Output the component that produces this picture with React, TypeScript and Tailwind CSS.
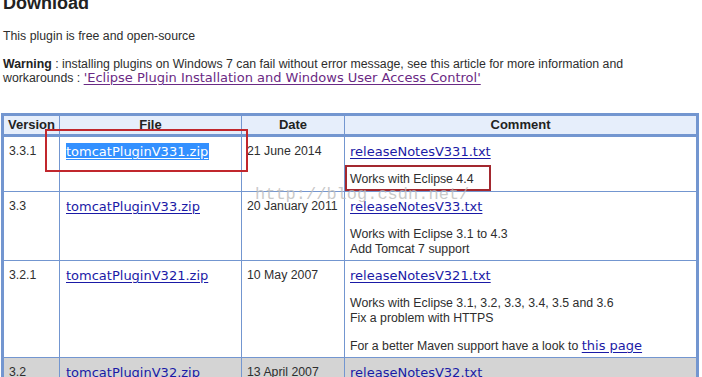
import React from "react"

const linkCls = "font-['DejaVu_Sans',sans-serif] text-[13px] text-[#1a1aa6] underline underline-offset-[2px]"

type Row = {
  version: string
  file: string
  date: string
  notes: string
  height: string
  gray?: boolean
  selected?: boolean
  comment: React.ReactNode[]
}

const rows: Row[] = [
  {
    version: "3.3.1",
    file: "tomcatPluginV331.zip",
    date: "21 June 2014",
    notes: "releaseNotesV331.txt",
    height: "h-[54px]",
    selected: true,
    comment: [<>Works with Eclipse 4.4</>],
  },
  {
    version: "3.3",
    file: "tomcatPluginV33.zip",
    date: "20 January 2011",
    notes: "releaseNotesV33.txt",
    height: "h-[69px]",
    comment: [
      <>
        Works with Eclipse 3.1 to 4.3
        <br />
        Add Tomcat 7 support
      </>,
    ],
  },
  {
    version: "3.2.1",
    file: "tomcatPluginV321.zip",
    date: "10 May 2007",
    notes: "releaseNotesV321.txt",
    height: "h-[97px]",
    comment: [
      <>
        Works with Eclipse 3.1, 3.2, 3.3, 3.4, 3.5 and 3.6
        <br />
        Fix a problem with HTTPS
      </>,
      <>
        For a better Maven support have a look to <a className={linkCls}>this page</a>
      </>,
    ],
  },
  {
    version: "3.2",
    file: "tomcatPluginV32.zip",
    date: "13 April 2007",
    notes: "releaseNotesV32.txt",
    height: "h-[40px]",
    gray: true,
    comment: [],
  },
]

export default function App() {
  return (
    <div className="relative h-[377px] w-[702px] overflow-hidden bg-white font-['Liberation_Sans',Arial,sans-serif] text-[12.3px] text-[#2e2e2e]">
      {/* Heading (cut off at top) */}
      <h2 className="-mt-[8px] pl-[3px] text-[18px] font-bold leading-[22px] text-[#222]">Download</h2>

      <p className="mt-[15px] pl-[3px] leading-[14px]">This plugin is free and open-source</p>

      <p className="mt-[14px] pl-[3px] leading-[14px]">
        <b className="text-[#222]">Warning</b> : installing plugins on Windows 7 can fail without error message, see this article for more
        information and
        <br />
        workarounds :{" "}
        <a className="font-['DejaVu_Sans',sans-serif] text-[13px] leading-[14px] text-[#6b2a84] underline underline-offset-[2px]">
          'Eclipse Plugin Installation and Windows User Access Control'
        </a>
      </p>

      {/* Versions table */}
      <div className="mt-[28px] ml-[1px] w-[698px] border-[3px] border-[#7396d0]">
        <div className="flex h-[21px] border-b-[3px] border-[#7396d0] bg-[#e6eefb] text-[13px] font-bold leading-[18px] text-[#222]">
          <div className="w-[55px] text-center">Version</div>
          <div className="w-[182px] border-l border-[#7396d0] text-center">File</div>
          <div className="w-[103px] border-l border-[#7396d0] text-center">Date</div>
          <div className="flex-1 border-l border-[#7396d0] text-center">Comment</div>
        </div>

        {rows.map((r, i) => (
          <div
            key={r.version}
            className={`flex ${r.height} ${i > 0 ? "border-t border-[#7396d0]" : ""} ${r.gray ? "bg-[#d4d4d4]" : "bg-white"} leading-[15px]`}
          >
            <div className="w-[55px] pt-[7px] pl-[5px]">{r.version}</div>
            <div className="w-[182px] border-l border-[#7396d0] pt-[7px] pl-[6px]">
              {r.selected ? (
                <span className="bg-[#3390ff] py-[1px] pr-[1px] font-['DejaVu_Sans',sans-serif] text-[13px] text-white underline underline-offset-[2px]">
                  {r.file}
                </span>
              ) : (
                <a className={linkCls}>{r.file}</a>
              )}
            </div>
            <div className="w-[103px] border-l border-[#7396d0] pt-[7px] pl-[5px]">{r.date}</div>
            <div className="flex-1 border-l border-[#7396d0] pt-[7px] pl-[5px]">
              <a className={linkCls}>{r.notes}</a>
              {r.comment.map((c, j) => (
                <p key={j} className="mt-[12px]">
                  {c}
                </p>
              ))}
            </div>
          </div>
        ))}
      </div>

      {/* Red annotation boxes */}
      <div className="absolute top-[129px] left-[45px] h-[43px] w-[203px] border-2 border-[#c1272d]" />
      <div className="absolute top-[165px] left-[345px] h-[26px] w-[146px] border-2 border-[#a3282f]" />

      {/* Watermark */}
      <div className="pointer-events-none absolute top-[186px] left-[255px] font-['Liberation_Mono',monospace] text-[17px] leading-[17px] text-[#bcbcbc]/80">
        http://blog.csdn.net/
      </div>
    </div>
  )
}
